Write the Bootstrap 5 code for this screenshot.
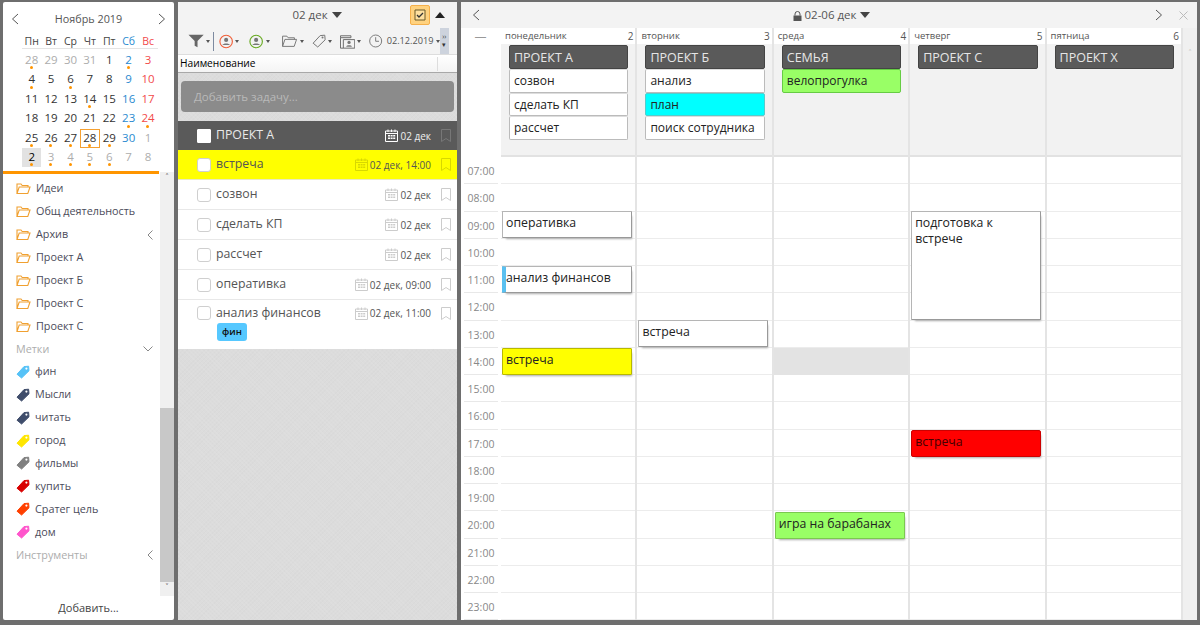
<!DOCTYPE html>
<html lang="ru">
  <head>
    <meta charset="UTF-8" />
    <title>Планировщик</title>
    <link href="https://cdn.jsdelivr.net/npm/bootstrap@5.3.0/dist/css/bootstrap.min.css" rel="stylesheet" />
    <style>
      html, body { height: 100%; overflow: hidden; }
      body { background: #6e6e6e; font-family: "Open Sans", "Noto Sans", sans-serif; font-size: 12px; color: #4a4a4a; line-height: 1.2; }
      .app-root { height: 625px; padding: 2px 3px 5px 3px; gap: 4px; }
      .side-pane { width: 171px; background: #fff; border-radius: 2px; flex: none; }
      .mid-pane { width: 279px; flex: none; background-color: #dcdcdc; background-image: repeating-linear-gradient(45deg, rgba(255,255,255,.07) 0 1px, transparent 1px 3px), repeating-linear-gradient(-45deg, rgba(0,0,0,.012) 0 1px, transparent 1px 3px); }
      .cal-pane { width: 736px; background: #fff; flex: none; }

      /* mini calendar */
      .mini-head { height: 33px; padding: 1px 8px 0 8px; font-size: 10.8px; color: #555; }
      .mini-grid { display: grid; grid-template-columns: repeat(7, 19.4px); grid-auto-rows: 19.4px; margin-left: 19px; text-align: center; font-size: 11.5px; }
      .mini-grid > span { position: relative; line-height: 18px; color: #333; }
      .wk-row { border-bottom: 1px solid #e4e4e4; height: 14px; margin: 0 0 2px 19px; display: grid; grid-template-columns: repeat(7, 19.4px); width: 136px; text-align: center; font-size: 10.5px; color: #444; line-height: 13px; }
      .txt-sat { color: #2a8ad0 !important; }
      .txt-sun { color: #f24a4a !important; }
      .txt-off { color: #adadad !important; }
      .has-dot::after { content: ""; position: absolute; left: 8px; bottom: 1px; width: 3px; height: 3px; border-radius: 50%; background: #ff9500; }
      .day-now { outline: 1px solid #f5a030; outline-offset: -1px; }
      .day-pick { background: #e2e2e2; color: #000 !important; }
      .orange-rule { height: 3px; width: 156px; background: #ff9500; margin-top: 4px; flex: none; }

      /* side tree */
      .tree-wrap { height: 424px; margin-top: -2px; }
      .tree-list { width: 157px; padding-top: 5px; }
      .tree-row { height: 22.9px; padding-left: 13px; padding-right: 7px; font-size: 10.8px; color: #4b4b5a; gap: 5px; }
      .tree-cap { color: #adadad; }
      .tree-row svg { flex: none; }
      .fake-scroll { width: 14px; background: #f0f0f0; }
      .scroll-thumb { height: 174px; background: #c8c8c8; }
      .scroll-btn { height: 14px; font-size: 9px; color: #333; }
      .add-link { height: 22px; font-size: 11px; color: #444; width: 171px; }

      /* task pane */
      .bar-top { height: 26px; background: #f3f3f3; font-size: 11.5px; color: #555; padding: 0 12px 0 46px; }
      .tri-down { display: inline-block; border-left: 5px solid transparent; border-right: 5px solid transparent; border-top: 6px solid #444; margin-left: 4px; vertical-align: 1px; }
      .tri-up { display: block; border-left: 5px solid transparent; border-right: 5px solid transparent; border-bottom: 6px solid #222; margin-left: 5px; }
      .tri-mini { display: inline-block; border-left: 2.5px solid transparent; border-right: 2.5px solid transparent; border-top: 3px solid #555; margin-left: 2px; flex: none; }
      .check-btn { width: 20px; height: 20px; background: #ffd27f; border: 1px solid #f5b04c; border-radius: 2px; }
      .tools-bar { height: 26px; background: #f3f3f3; padding-left: 10px; font-size: 9.2px; color: #555; }
      .tool-sep { width: 1px; height: 19px; background: #7d8aa0; margin: 0 5px 0 3px; }
      .tool-gap { margin-right: 10px; }
      .tool-gap-wide { margin-right: 11px; }
      .tool-gap-tight { margin-right: 8px; }
      .tool-more { width: 10px; height: 26px; background: #cdd3dd; font-size: 7px; line-height: 8px; color: #333; }
      .col-head { height: 19px; background: linear-gradient(#fff, #f4f4f4); border-top: 1px solid #ddd; border-bottom: 1px solid #a8a8a8; font-size: 10.2px; color: #000; padding-left: 2px; font-weight: 500; }
      .col-end { width: 1px; height: 14px; background: #ddd; margin-right: 19px; }
      .add-box { margin: 8px 3px 9px 3px; height: 31px; background: #8b8b8b; border-radius: 4px; color: #b9b9b9; padding-left: 13px; font-size: 11.5px; }
      .task-row { height: 30px; background: #fff; border-bottom: 1px solid #e8e8e8; font-size: 12.3px; color: #555; padding: 0 6px 0 19px; }
      .task-tall { height: 49px; padding-top: 6px; border-bottom: 0; }
      .task-head { background: #5a5a5a; color: #e9e9e9; border-bottom: 0; height: 29px; }
      .task-hot { background: #ffff00; color: #555; border-bottom: 1px solid #e9e9c0; }
      .tick-box { width: 14px; height: 14px; border: 1px solid #cfcfcf; border-radius: 3px; background: #fff; margin-right: 5px; flex: none; }
      .task-head .tick-box { border-radius: 1px; border-color: #fff; }
      .task-date { font-size: 10px; color: #555; margin-left: auto; gap: 2px; justify-content: flex-end; margin-right: 10px; white-space: nowrap; }
      .task-head .task-date { color: #eee; }
      .tag-fin { background: #56c8ff; color: #111; font-size: 9.5px; font-weight: 600; width: 30px; text-align: center; height: 18px; line-height: 17px; border-radius: 3px; display: block; margin: 2px 0 0 20px; }

      /* week view */
      .week-bar { height: 26px; background: #f3f3f3; padding: 0 9px 0 11px; font-size: 11.5px; color: #555; }
      .week-title { padding-left: 28px; }
      .week-body { height: 592px; padding-left: 3px; }
      .time-col { width: 37px; flex: none; }
      .time-top { height: 129px; color: #999; text-align: center; padding-top: 4px; padding-right: 4px; line-height: 10px; }
      .time-cell { height: 27.25px; line-height: 29px; border-bottom: 1px solid #e8e8e8; font-size: 10.5px; color: #888; margin-right: 3px; text-align: center; }
      .day-col { width: 136.4px; flex: none; border-right: 2px solid #e4e4e4; }
      .day-name { height: 16px; padding: 2px 2px 0 4px; font-size: 9.5px; color: #555; line-height: 12px; }
      .day-num { font-size: 10px; }
      .all-day { height: 113px; background: #f2f2f2; border-bottom: 2px solid #e2e2e2; padding: 1px 7px 0 8px; }
      .all-day > div { height: 23.5px; background: #fff; border: 1px solid #bbb; border-top-color: #ddd; border-radius: 2px; padding-left: 4px; font-size: 12px; line-height: 22px; color: #222; white-space: nowrap; }
      .all-day > .ad-dark { height: 24px; background: #5a5a5a; color: #e6e6e6; border: 1px solid #444; font-size: 12.5px; line-height: 23px; }
      .all-day > .ad-cyan { background: #00ffff; border-color: #5cc; }
      .all-day > .ad-green { background: #99ff66; border-color: #6c4; }
      .hour-grid { position: relative; height: 463px; background: repeating-linear-gradient(#fff 0 26.25px, #ececec 26.25px 27.25px); }
      .ev-box { position: absolute; left: 1px; width: 130px; height: 27px; background: #fff; border: 1px solid #b5b5b5; border-bottom-color: #999; border-right-color: #999; border-radius: 1px; box-shadow: 2px 3px 2px -2px #aaa; font-size: 12.3px; line-height: 16px; color: #222; padding: 3px 0 0 3px; z-index: 1; }
      .ev-yellow { background: #ffff00; border-color: #b8b800; }
      .ev-green { background: #99ff66; border-color: #7bc850; }
      .ev-red { background: #ff0000; border-color: #c00; color: #400; border-radius: 2px; }
      .ev-fin { border-left: 4px solid #5ac0f0; padding-left: 0; }
      .busy-slot { position: absolute; left: 0; right: 0; height: 27px; background: #e3e3e3; }
      .at-0900 { top: 54px; }
      .at-1100 { top: 109px; }
      .at-1300 { top: 163px; }
      .at-1400 { top: 191px; }
      .at-1700 { top: 273px; }
      .at-2000 { top: 355px; }
      .ev-long { height: 109px; }
      .week-scroll { width: 14px; flex: none; background: #f0f0f0; color: #bbb; font-size: 9px; text-align: center; padding-top: 20px; }
    </style>
  </head>
  <body>
    <svg width="0" height="0" class="position-absolute">
      <symbol id="i-folder" viewBox="0 0 15 13"><path d="M1 11.500V2h4l1.200 1.500H12V5M1 11.500 3.200 5H14l-2.200 6.500z" fill="none" stroke="#f0a030" stroke-width="1.100"/></symbol>
      <symbol id="i-folder-gray" viewBox="0 0 15 13"><path d="M1 11.500V2h4l1.200 1.500H12V5M1 11.500 3.200 5H14l-2.200 6.500z" fill="none" stroke="#777" stroke-width=".9"/></symbol>
      <symbol id="i-tag" viewBox="0 0 14 14"><path d="M1 9.200 8 1.600 12.600 1.200 13 5.800 5.600 13z" fill="currentColor" stroke="currentColor" stroke-linejoin="round"/><circle cx="10.400" cy="3.600" r="1.100" fill="#fff"/></symbol>
      <symbol id="i-cal" viewBox="0 0 13 13"><path d="M.5 2h12v10.500H.5zM.5 4.500h12" fill="none" stroke="currentColor"/><path d="M2.500.5h1v2.500h-1zM6 .5h1v2.500H6zM9.500.5h1v2.500h-1zM3 6h2v1.500H3zM5.600 6h2v1.500h-2zM8.200 6h2v1.500h-2zM3 8.500h2V10H3zM5.600 8.500h2V10h-2zM8.200 8.500h2V10h-2z" fill="currentColor"/></symbol>
      <symbol id="i-mark" viewBox="0 0 10 13"><path d="M.5.500h9v12L5 9.500.5 12.500z" fill="none" stroke="currentColor"/></symbol>
      <symbol id="i-user" viewBox="0 0 16 16"><circle cx="8" cy="8" r="7" fill="none" stroke="currentColor" stroke-width="1.300"/><circle cx="8" cy="6.200" r="2.300" fill="#777"/><path d="M3.800 12c.4-2.400 8-2.400 8.400 0z" fill="#777"/></symbol>
    </svg>

    <div class="app-root d-flex">
      <!-- левая колонка -->
      <aside class="side-pane d-flex flex-column">
        <div class="mini-head d-flex align-items-center justify-content-between">
          <svg width="8" height="12" viewBox="0 0 8 12"><path d="M7 1 1.500 6 7 11" fill="none" stroke="#555"/></svg>
          <span>Ноябрь 2019</span>
          <svg width="8" height="12" viewBox="0 0 8 12"><path d="M1 1 6.500 6 1 11" fill="none" stroke="#555"/></svg>
        </div>
        <div class="wk-row">
          <span>Пн</span><span>Вт</span><span>Ср</span><span>Чт</span><span>Пт</span><span class="txt-sat">Сб</span><span class="txt-sun">Вс</span>
        </div>
        <div class="mini-grid">
          <span class="txt-off has-dot">28</span><span class="txt-off">29</span><span class="txt-off">30</span><span class="txt-off">31</span><span>1</span><span class="txt-sat has-dot">2</span><span class="txt-sun">3</span>
          <span class="has-dot">4</span><span>5</span><span class="has-dot">6</span><span>7</span><span>8</span><span class="txt-sat">9</span><span class="txt-sun">10</span>
          <span>11</span><span>12</span><span>13</span><span class="has-dot">14</span><span>15</span><span class="txt-sat">16</span><span class="txt-sun">17</span>
          <span>18</span><span>19</span><span>20</span><span>21</span><span>22</span><span class="txt-sat has-dot">23</span><span class="txt-sun has-dot">24</span>
          <span class="has-dot">25</span><span class="has-dot">26</span><span class="has-dot">27</span><span class="has-dot day-now">28</span><span class="has-dot">29</span><span class="txt-sat">30</span><span class="txt-off">1</span>
          <span class="has-dot day-pick">2</span><span class="txt-off has-dot">3</span><span class="txt-off has-dot">4</span><span class="txt-off has-dot">5</span><span class="txt-off has-dot">6</span><span class="txt-off">7</span><span class="txt-off">8</span>
        </div>
        <div class="orange-rule"></div>
        <div class="tree-wrap d-flex">
          <div class="tree-list">
            <div class="tree-row d-flex align-items-center"><svg width="15" height="13"><use href="#i-folder"/></svg>Идеи</div>
            <div class="tree-row d-flex align-items-center"><svg width="15" height="13"><use href="#i-folder"/></svg>Общ деятельность</div>
            <div class="tree-row d-flex align-items-center"><svg width="15" height="13"><use href="#i-folder"/></svg>Архив<svg class="ms-auto" width="6" height="10" viewBox="0 0 6 10"><path d="M5.500.5 1 5l4.500 4.500" fill="none" stroke="#888"/></svg></div>
            <div class="tree-row d-flex align-items-center"><svg width="15" height="13"><use href="#i-folder"/></svg>Проект А</div>
            <div class="tree-row d-flex align-items-center"><svg width="15" height="13"><use href="#i-folder"/></svg>Проект Б</div>
            <div class="tree-row d-flex align-items-center"><svg width="15" height="13"><use href="#i-folder"/></svg>Проект С</div>
            <div class="tree-row d-flex align-items-center"><svg width="15" height="13"><use href="#i-folder"/></svg>Проект С</div>
            <div class="tree-row tree-cap d-flex align-items-center">Метки<svg class="ms-auto" width="10" height="6" viewBox="0 0 10 6"><path d="M.5.500 5 5 9.500.5" fill="none" stroke="#888"/></svg></div>
            <div class="tree-row d-flex align-items-center"><svg width="14" height="14" color="#56c2f7"><use href="#i-tag"/></svg>фин</div>
            <div class="tree-row d-flex align-items-center"><svg width="14" height="14" color="#3f4d6b"><use href="#i-tag"/></svg>Мысли</div>
            <div class="tree-row d-flex align-items-center"><svg width="14" height="14" color="#3f4d6b"><use href="#i-tag"/></svg>читать</div>
            <div class="tree-row d-flex align-items-center"><svg width="14" height="14" color="#ffe600"><use href="#i-tag"/></svg>город</div>
            <div class="tree-row d-flex align-items-center"><svg width="14" height="14" color="#808080"><use href="#i-tag"/></svg>фильмы</div>
            <div class="tree-row d-flex align-items-center"><svg width="14" height="14" color="#d80000"><use href="#i-tag"/></svg>купить</div>
            <div class="tree-row d-flex align-items-center"><svg width="14" height="14" color="#ff4000"><use href="#i-tag"/></svg>Сратег цель</div>
            <div class="tree-row d-flex align-items-center"><svg width="14" height="14" color="#ff55cc"><use href="#i-tag"/></svg>дом</div>
            <div class="tree-row tree-cap d-flex align-items-center">Инструменты<svg class="ms-auto" width="6" height="10" viewBox="0 0 6 10"><path d="M5.500.5 1 5l4.500 4.500" fill="none" stroke="#888"/></svg></div>
          </div>
          <div class="fake-scroll d-flex flex-column">
            <div class="scroll-btn text-center">&#708;</div>
            <div class="flex-grow-1"></div>
            <div class="scroll-thumb"></div>
            <div class="scroll-btn text-center">&#709;</div>
          </div>
        </div>
        <div class="add-link d-flex align-items-center justify-content-center">Добавить...</div>
      </aside>

      <!-- задачи -->
      <section class="mid-pane d-flex flex-column">
        <div class="bar-top d-flex align-items-center">
          <div class="flex-grow-1 text-center">02 дек<span class="tri-down"></span></div>
          <div class="check-btn d-flex align-items-center justify-content-center">
            <svg width="12" height="12" viewBox="0 0 12 12"><path d="M1 1h10v10H1z" fill="#ffe0a0" stroke="#6b5a2a"/><path d="m3 6 2 2 4-4" fill="none" stroke="#333" stroke-width="1.300"/></svg>
          </div>
          <span class="tri-up"></span>
        </div>
        <div class="tools-bar d-flex align-items-center">
          <svg width="17" height="14" viewBox="0 0 17 14"><path d="M.5.500h16L10 7v6.500L7 12V7z" fill="#666"/></svg><span class="tri-mini"></span>
          <span class="tool-sep"></span>
          <svg width="15" height="15" color="#f0603a"><use href="#i-user"/></svg><span class="tri-mini tool-gap"></span>
          <svg width="15" height="15" color="#6aab25"><use href="#i-user"/></svg><span class="tri-mini tool-gap-wide"></span>
          <svg width="18" height="14"><use href="#i-folder-gray"/></svg><span class="tri-mini tool-gap-tight"></span>
          <svg width="15" height="14" viewBox="0 0 14 14"><path d="M1 9.200 8 1.600 12.600 1.200 13 5.800 5.600 13z" fill="none" stroke="#777"/><circle cx="10.400" cy="3.600" r="1" fill="#777"/></svg><span class="tri-mini tool-gap-tight"></span>
          <svg width="16" height="15" viewBox="0 0 16 15"><path d="M.5 1.500h11v2H.5zM.5 3.500v11h3M3.500 5.500h12v9h-12z" fill="none" stroke="#666"/><circle cx="9.500" cy="8.500" r="1.700" fill="#777"/><path d="M6.500 13c.3-2 5.700-2 6 0z" fill="#777"/></svg><span class="tri-mini tool-gap-tight"></span>
          <svg width="14" height="14" viewBox="0 0 14 14"><circle cx="7" cy="7" r="6.300" fill="none" stroke="#777"/><path d="M7 3v4.300h3.500" fill="none" stroke="#777"/></svg>
          <span class="ms-1">02.12.2019</span><span class="tri-mini"></span>
          <div class="tool-more ms-auto me-2 text-center d-flex flex-column justify-content-center">&#8250;&#8250;<br />&#9662;</div>
        </div>
        <div class="col-head d-flex align-items-center justify-content-between"><span>Наименование</span><span class="col-end"></span></div>
        <div class="add-box d-flex align-items-center">Добавить задачу...</div>

        <div class="task-row task-head d-flex align-items-center">
          <span class="tick-box"></span><span>ПРОЕКТ А</span>
          <span class="task-date d-flex align-items-center"><svg width="13" height="13" color="#fff"><use href="#i-cal"/></svg>02 дек</span>
          <svg width="10" height="13" color="#777"><use href="#i-mark"/></svg>
        </div>
        <div class="task-row task-hot d-flex align-items-center">
          <span class="tick-box"></span><span>встреча</span>
          <span class="task-date d-flex align-items-center"><svg width="13" height="13" color="#d8d800"><use href="#i-cal"/></svg>02 дек, 14:00</span>
          <svg width="10" height="13" color="#d8d800"><use href="#i-mark"/></svg>
        </div>
        <div class="task-row d-flex align-items-center">
          <span class="tick-box"></span><span>созвон</span>
          <span class="task-date d-flex align-items-center"><svg width="13" height="13" color="#ccc"><use href="#i-cal"/></svg>02 дек</span>
          <svg width="10" height="13" color="#ccc"><use href="#i-mark"/></svg>
        </div>
        <div class="task-row d-flex align-items-center">
          <span class="tick-box"></span><span>сделать КП</span>
          <span class="task-date d-flex align-items-center"><svg width="13" height="13" color="#ccc"><use href="#i-cal"/></svg>02 дек</span>
          <svg width="10" height="13" color="#ccc"><use href="#i-mark"/></svg>
        </div>
        <div class="task-row d-flex align-items-center">
          <span class="tick-box"></span><span>рассчет</span>
          <span class="task-date d-flex align-items-center"><svg width="13" height="13" color="#ccc"><use href="#i-cal"/></svg>02 дек</span>
          <svg width="10" height="13" color="#ccc"><use href="#i-mark"/></svg>
        </div>
        <div class="task-row d-flex align-items-center">
          <span class="tick-box"></span><span>оперативка</span>
          <span class="task-date d-flex align-items-center"><svg width="13" height="13" color="#ccc"><use href="#i-cal"/></svg>02 дек, 09:00</span>
          <svg width="10" height="13" color="#ccc"><use href="#i-mark"/></svg>
        </div>
        <div class="task-row task-tall">
          <div class="d-flex align-items-center">
            <span class="tick-box"></span><span>анализ финансов</span>
            <span class="task-date d-flex align-items-center"><svg width="13" height="13" color="#ccc"><use href="#i-cal"/></svg>02 дек, 11:00</span>
            <svg width="10" height="13" color="#ccc"><use href="#i-mark"/></svg>
          </div>
          <span class="tag-fin">фин</span>
        </div>
      </section>

      <!-- неделя -->
      <section class="cal-pane d-flex flex-column">
        <div class="week-bar d-flex align-items-center">
          <svg width="8" height="12" viewBox="0 0 8 12"><path d="M7 1 1.500 6 7 11" fill="none" stroke="#555"/></svg>
          <div class="week-title flex-grow-1 text-center">
            <svg width="9" height="10" viewBox="0 0 9 10"><path d="M2 4.500V3a2.500 2.500 0 0 1 5 0v1.500" fill="none" stroke="#555"/><path d="M.5 4.500h8V10h-8z" fill="#555"/></svg>
            02-06 дек<span class="tri-down"></span>
          </div>
          <svg class="me-3" width="8" height="12" viewBox="0 0 8 12"><path d="M1 1 6.500 6 1 11" fill="none" stroke="#555"/></svg>
          <svg width="9" height="9" viewBox="0 0 9 9"><path d="m.5.500 8 8M8.500.5l-8 8" stroke="#bbb"/></svg>
        </div>
        <div class="week-body d-flex">
          <div class="time-col">
            <div class="time-top">&mdash;</div>
            <div class="time-cell">07:00</div>
            <div class="time-cell">08:00</div>
            <div class="time-cell">09:00</div>
            <div class="time-cell">10:00</div>
            <div class="time-cell">11:00</div>
            <div class="time-cell">12:00</div>
            <div class="time-cell">13:00</div>
            <div class="time-cell">14:00</div>
            <div class="time-cell">15:00</div>
            <div class="time-cell">16:00</div>
            <div class="time-cell">17:00</div>
            <div class="time-cell">18:00</div>
            <div class="time-cell">19:00</div>
            <div class="time-cell">20:00</div>
            <div class="time-cell">21:00</div>
            <div class="time-cell">22:00</div>
            <div class="time-cell">23:00</div>
          </div>

          <div class="day-col">
            <div class="day-name d-flex justify-content-between"><span>понедельник</span><span class="day-num">2</span></div>
            <div class="all-day">
              <div class="ad-dark">ПРОЕКТ А</div>
              <div>созвон</div>
              <div>сделать КП</div>
              <div>рассчет</div>
            </div>
            <div class="hour-grid">
              <div class="ev-box at-0900">оперативка</div>
              <div class="ev-box ev-fin at-1100">анализ финансов</div>
              <div class="ev-box ev-yellow at-1400">встреча</div>
            </div>
          </div>

          <div class="day-col">
            <div class="day-name d-flex justify-content-between"><span>вторник</span><span class="day-num">3</span></div>
            <div class="all-day">
              <div class="ad-dark">ПРОЕКТ Б</div>
              <div>анализ</div>
              <div class="ad-cyan">план</div>
              <div>поиск сотрудника</div>
            </div>
            <div class="hour-grid">
              <div class="ev-box at-1300">встреча</div>
            </div>
          </div>

          <div class="day-col">
            <div class="day-name d-flex justify-content-between"><span>среда</span><span class="day-num">4</span></div>
            <div class="all-day">
              <div class="ad-dark">СЕМЬЯ</div>
              <div class="ad-green">велопрогулка</div>
            </div>
            <div class="hour-grid">
              <div class="busy-slot at-1400"></div>
              <div class="ev-box ev-green at-2000">игра на барабанах</div>
            </div>
          </div>

          <div class="day-col">
            <div class="day-name d-flex justify-content-between"><span>четверг</span><span class="day-num">5</span></div>
            <div class="all-day">
              <div class="ad-dark">ПРОЕКТ С</div>
            </div>
            <div class="hour-grid">
              <div class="ev-box ev-long at-0900">подготовка к<br />встрече</div>
              <div class="ev-box ev-red at-1700">встреча</div>
            </div>
          </div>

          <div class="day-col">
            <div class="day-name d-flex justify-content-between"><span>пятница</span><span class="day-num">6</span></div>
            <div class="all-day">
              <div class="ad-dark">ПРОЕКТ Х</div>
            </div>
            <div class="hour-grid"></div>
          </div>

          <div class="week-scroll">&#708;</div>
        </div>
      </section>
    </div>
    <script src="https://cdn.jsdelivr.net/npm/bootstrap@5.3.0/dist/js/bootstrap.bundle.min.js"></script>
  </body>
</html>
